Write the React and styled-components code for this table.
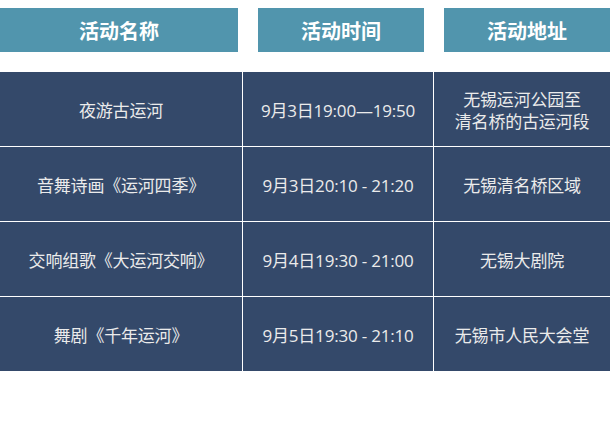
import React from 'react'
import styled, { createGlobalStyle } from 'styled-components'

const GlobalStyle = createGlobalStyle`
  html, body {
    margin: 0;
    padding: 0;
    background: #ffffff;
  }
  body {
    font-family: "Open Sans", "Noto Sans CJK SC", sans-serif;
  }
`

const Page = styled.div`
  width: 610px;
  height: 433px;
  padding-top: 8px;
  box-sizing: border-box;
  background: #ffffff;
`

const HeaderRow = styled.div`
  display: flex;
  gap: 20px;
  height: 44px;
`

const HeaderCell = styled.div`
  width: ${props => props.w}px;
  flex: ${props => props.grow ? 1 : 'none'};
  display: flex;
  align-items: center;
  justify-content: center;
  background-color: #5195ad;
  color: #ffffff;
  font-family: "Noto Sans CJK SC", sans-serif;
  font-weight: 700;
  font-size: 20px;
`

const Table = styled.div`
  margin-top: 20px;
  display: grid;
  grid-template-columns: 243px 191px 176px;
  background-color: #34496a;
`

const Cell = styled.div`
  box-sizing: border-box;
  display: flex;
  align-items: center;
  justify-content: center;
  text-align: center;
  padding-top: 3px;
  color: #ebebeb;
  font-size: 17px;
  line-height: 22px;
  letter-spacing: -0.2px;
  border-right: ${props => props.last ? 'none' : '1px solid #ffffff'};
  border-bottom: ${props => props.bottom ? 'none' : '1px solid #ffffff'};
  height: ${props => props.bottom ? 74 : 75}px;
`

const titles = ['活动名称', '活动时间', '活动地址']

const events = [
  { name: '夜游古运河', time: '9月3日19:00—19:50', place: ['无锡运河公园至', '清名桥的古运河段'] },
  { name: '音舞诗画《运河四季》', time: '9月3日20:10 - 21:20', place: ['无锡清名桥区域'] },
  { name: '交响组歌《大运河交响》', time: '9月4日19:30 - 21:00', place: ['无锡大剧院'] },
  { name: '舞剧《千年运河》', time: '9月5日19:30 - 21:10', place: ['无锡市人民大会堂'] },
]

const App = () => {
  return (
    <Page>
      <GlobalStyle />
      <HeaderRow>
        <HeaderCell w={238}>{ titles[0] }</HeaderCell>
        <HeaderCell w={166}>{ titles[1] }</HeaderCell>
        <HeaderCell grow>{ titles[2] }</HeaderCell>
      </HeaderRow>
      <Table>
        { events.map((ev, i) => {
          const bottom = i === events.length - 1
          return (
            <React.Fragment key={ev.name}>
              <Cell bottom={bottom}>{ ev.name }</Cell>
              <Cell bottom={bottom}>{ ev.time }</Cell>
              <Cell bottom={bottom} last>
                <span>
                  { ev.place.map((line, j) => (
                    <React.Fragment key={line}>
                      { j > 0 ? <br /> : null }
                      { line }
                    </React.Fragment>
                  )) }
                </span>
              </Cell>
            </React.Fragment>
          )
        }) }
      </Table>
    </Page>
  )
}

export default App
